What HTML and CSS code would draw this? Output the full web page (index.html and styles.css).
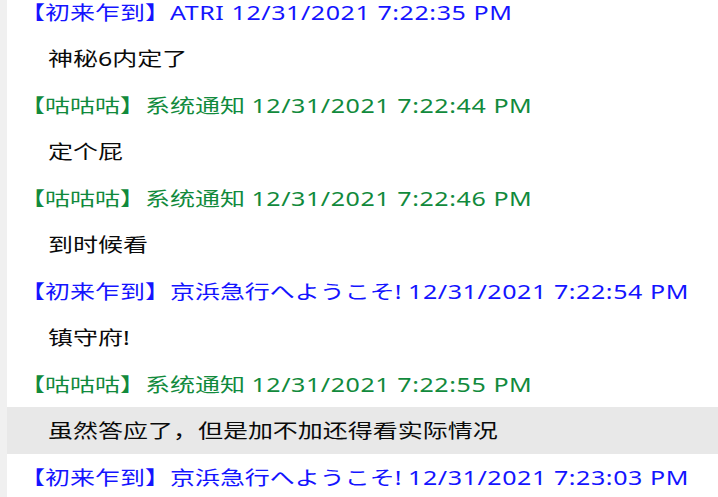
FILE: index.html
```html
<!DOCTYPE html>
<html lang="zh">
<head>
<meta charset="utf-8">
<title>Chat log</title>
<link rel="stylesheet" href="styles.css">
</head>
<body>
<div class="window">
  <div class="gutter"></div>
  <ul class="log">
    <li class="row head blue"><span class="t">【初来乍到】<span class="lat">ATRI 12/31/2021 7:22:35 PM</span></span></li>
    <li class="row msg"><span class="t">神秘6内定了</span></li>
    <li class="row head green"><span class="t">【咕咕咕】系统通知 <span class="lat">12/31/2021 7:22:44 PM</span></span></li>
    <li class="row msg"><span class="t">定个屁</span></li>
    <li class="row head green"><span class="t">【咕咕咕】系统通知 <span class="lat">12/31/2021 7:22:46 PM</span></span></li>
    <li class="row msg"><span class="t">到时候看</span></li>
    <li class="row head blue"><span class="t">【初来乍到】京浜急行へようこそ! <span class="lat">12/31/2021 7:22:54 PM</span></span></li>
    <li class="row msg"><span class="t">镇守府!</span></li>
    <li class="row head green"><span class="t">【咕咕咕】系统通知 <span class="lat">12/31/2021 7:22:55 PM</span></span></li>
    <li class="row msg selected"><span class="t">虽然答应了，但是加不加还得看实际情况</span></li>
    <li class="row head blue"><span class="t">【初来乍到】京浜急行へようこそ! <span class="lat">12/31/2021 7:23:03 PM</span></span></li>
  </ul>
</div>
</body>
</html>
```

FILE: styles.css
```css
html, body {
  margin: 0;
  padding: 0;
  background: #ffffff;
  overflow: hidden;
}

.window {
  display: flex;
  width: 718px;
  height: 497px;
  overflow: hidden;
  font-family: "Noto Sans", "Noto Sans CJK SC", sans-serif;
  font-size: 19px;
}

.gutter {
  flex: 0 0 7px;
  background: #f0f0f0;
}

.log {
  flex: 1;
  list-style: none;
  margin: -11.5px 0 0 0;
  padding: 0;
}

.row {
  height: 46.5px;
  display: flex;
  align-items: center;
  white-space: nowrap;
}

.row .t {
  display: inline-block;
  transform: scaleX(1.315);
  transform-origin: 0 50%;
}

.lat {
  letter-spacing: 0.45px;
}

.head {
  padding-left: 13px;
}

.msg {
  padding-left: 41px;
  color: #0a0a0a;
}

.blue {
  color: #1414ff;
}

.green {
  color: #118a3c;
}

.selected {
  background: #e8e8e8;
}
```
